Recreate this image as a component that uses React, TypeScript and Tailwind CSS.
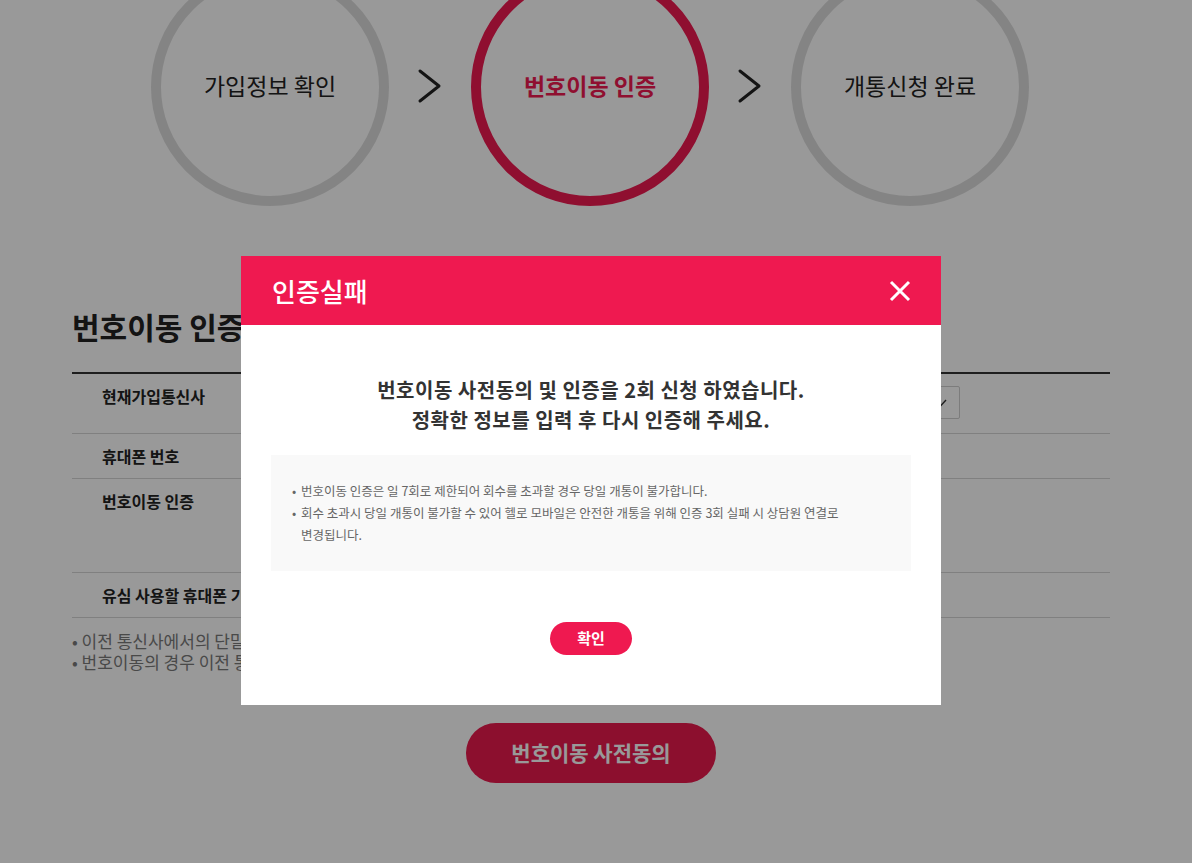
import React from 'react';

const FONT = "font-['Noto_Sans_CJK_KR','Noto_Sans',sans-serif]";

const steps = [
  { label: '가입정보 확인', active: false },
  { label: '번호이동 인증', active: true },
  { label: '개통신청 완료', active: false },
];

const Arrow = () => (
  <svg width="26" height="36" viewBox="0 0 26 36" fill="none">
    <path d="M3 3 L22 18 L3 33" stroke="#222" strokeWidth="3" strokeLinecap="round" strokeLinejoin="round" />
  </svg>
);

const StepBar = () => (
  <div className="flex items-center pl-[151px] -mt-[32px]">
    {steps.map((s, i) => (
      <React.Fragment key={s.label}>
        {i > 0 && (
          <div className="w-[82px] flex justify-center pb-[3px]">
            <Arrow />
          </div>
        )}
        <div
          className={
            s.active
              ? 'w-[238px] h-[238px] rounded-full border-[10px] border-[#ef1950] flex items-center justify-center'
              : 'w-[238px] h-[238px] rounded-full border-[10px] border-[#dddddd] flex items-center justify-center'
          }
        >
          <span
            className={
              s.active
                ? 'text-[23px] leading-[30px] pb-[4px] font-bold text-[#ef1950]'
                : 'text-[23px] leading-[30px] pb-[4px] text-[#222]'
            }
          >
            {s.label}
          </span>
        </div>
      </React.Fragment>
    ))}
  </div>
);

const Row: React.FC<{ label: string; className: string; children?: React.ReactNode }> = ({ label, className, children }) => (
  <div className={`flex border-b border-[#d5d5d5] ${className}`}>
    <div className="w-[230px] pl-[30px] text-[16px] leading-[24px] font-bold text-[#222]">{label}</div>
    <div className="flex-1">{children}</div>
  </div>
);

const PortForm = () => (
  <div className="pl-[72px] w-[1110px]">
    <h2 className="mt-[100px] text-[30px] leading-[40px] font-bold text-[#222]">번호이동 인증</h2>
    <div className="mt-[26px] border-t-2 border-[#333]">
      <Row label="현재가입통신사" className="h-[60px] pt-[10px]">
        <div className="flex justify-end pr-[150px] pt-[2px]">
          <div className="w-[300px] h-[33px] border border-[#cfcfcf] rounded-[2px] flex items-center justify-end px-3">
            <svg width="10" height="8" viewBox="0 0 10 8" fill="none">
              <path d="M1 4.5 L3.5 7 L9 1" stroke="#333" strokeWidth="1.4" />
            </svg>
          </div>
        </div>
      </Row>
      <Row label="휴대폰 번호" className="h-[45px] items-center" />
      <Row label="번호이동 인증" className="h-[94px] pt-[10px]" />
      <Row label="유심 사용할 휴대폰 기종" className="h-[45px] items-center" />
    </div>
    <ul className="mt-[12px] text-[17px] leading-[21px] text-[#7a7a7a]">
      <li>• 이전 통신사에서의 단말기 할부금 및 요금은 이전 통신사로 청구됩니다.</li>
      <li>• 번호이동의 경우 이전 통신사의 약정 위약금이 발생할 수 있습니다.</li>
    </ul>
    <div className="flex justify-center mt-[51px] pb-[80px]">
      <button className="w-[250px] h-[60px] rounded-full bg-[#e9194d] text-white text-[21px] font-bold">번호이동 사전동의</button>
    </div>
  </div>
);

const FailModal = () => (
  <div className="absolute left-[241px] top-[256px] w-[700px] bg-white">
    <div className="h-[69px] bg-[#ef1950] flex items-center justify-between pl-[31px] pr-[30px]">
      <h3 className="text-[26px] text-white font-medium">인증실패</h3>
      <svg width="22" height="22" viewBox="0 0 22 22" fill="none">
        <path d="M2 2 L20 20 M20 2 L2 20" stroke="#fff" strokeWidth="3" />
      </svg>
    </div>
    <div className="px-[30px] pt-[50px] pb-[50px]">
      <p className="text-center text-[20px] leading-[30px] tracking-[0.5px] font-bold text-[#333]">
        번호이동 사전동의 및 인증을 2회 신청 하였습니다.
        <br />
        정확한 정보를 입력 후 다시 인증해 주세요.
      </p>
      <div className="mt-[20px] bg-[#f9f9f9] px-[21px] py-[25px]">
        <ul className="text-[12.5px] leading-[22px] text-[#666] break-keep">
          <li className="flex">
            <span className="w-[9px] shrink-0">•</span>
            <span>번호이동 인증은 일 7회로 제한되어 회수를 초과할 경우 당일 개통이 불가합니다.</span>
          </li>
          <li className="flex">
            <span className="w-[9px] shrink-0">•</span>
            <span className="w-[560px]">회수 초과시 당일 개통이 불가할 수 있어 헬로 모바일은 안전한 개통을 위해 인증 3회 실패 시 상담원 연결로 변경됩니다.</span>
          </li>
        </ul>
      </div>
      <div className="flex justify-center mt-[51px]">
        <button className="w-[82px] h-[33px] rounded-full bg-[#ef1950] text-white text-[15px] font-bold">확인</button>
      </div>
    </div>
  </div>
);

export default function App() {
  return (
    <div className={`relative min-h-[863px] bg-white overflow-hidden ${FONT}`}>
      <StepBar />
      <PortForm />
      <div className="fixed inset-0 bg-black/40" />
      <FailModal />
    </div>
  );
}
